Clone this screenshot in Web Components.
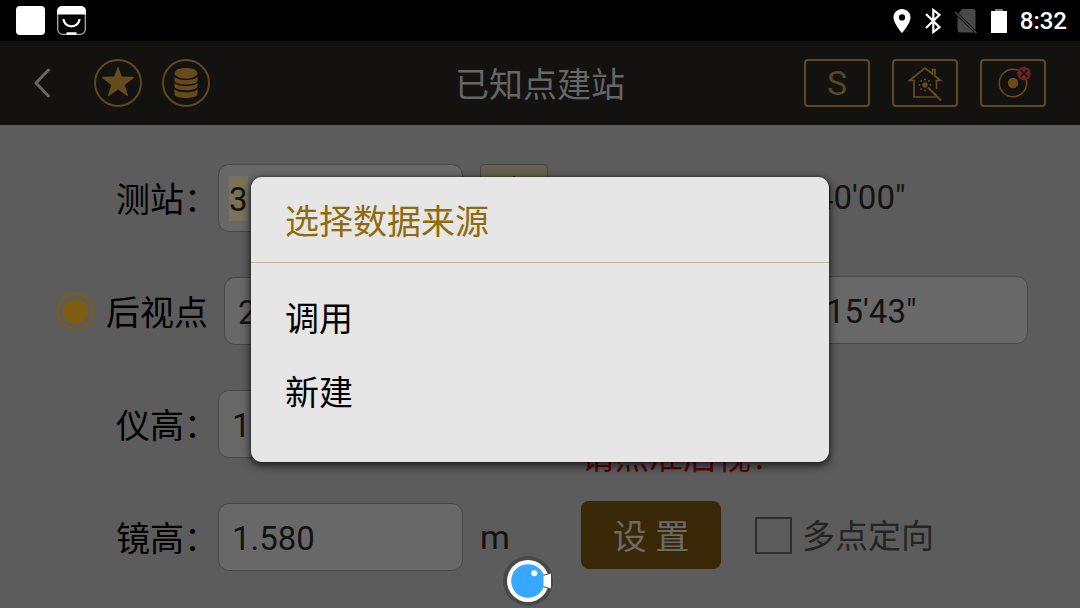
<!DOCTYPE html>
<html lang="zh-CN">
<head>
<meta charset="utf-8">
<meta name="viewport" content="width=device-width, initial-scale=1">
<title>已知点建站</title>
<style>
  body {
    margin: 0;
    background: #5c5c5c;
    color: #000;
    font: 34px/48px Roboto, "Noto Sans CJK SC", sans-serif;
  }
</style>
</head>
<body>
<station-app></station-app>

<script>
const define = (name, html, setup) => {
  const template = document.createElement('template');
  template.innerHTML = html;
  customElements.define(name, class extends HTMLElement {
    connectedCallback() {
      if (this.shadowRoot) return;
      const root = this.attachShadow({ mode: 'open' });
      root.append(template.content.cloneNode(true));
      if (setup) setup(root, this);
    }
  });
};

/* Android status bar */
define('status-bar', `
  <style>
    :host { display: flex; align-items: center; justify-content: space-between; box-sizing: border-box;
      height: 41px; padding: 0 13px 0 16px; background: #000; color: #fff; }
    div { display: flex; align-items: center; }
    .left { gap: 12px; }
    svg { display: block; flex: none; }
    time { font-size: 24px; line-height: 28px; font-weight: 500; margin-left: 6px; }
  </style>
  <div class="left">
    <svg width="29" height="29"><rect width="29" height="29" rx="4" fill="#fff"/></svg>
    <svg width="29" height="29" viewBox="0 0 29 29"><rect x=".7" y=".7" width="27.6" height="27.6" rx="5" fill="none" stroke="#aaa" stroke-width="1.3"/><path d="M0 8.500V5a5 5 0 0 1 5-5h19a5 5 0 0 1 5 5v3.500z" fill="#fff"/><path d="M6.500 13c0 4 3.400 7.300 8 7.300s8-3.300 8-7.300" fill="none" stroke="#fff" stroke-width="2.200"/><path d="M9.500 27.500h10" stroke="#fff" stroke-width="2.500"/></svg>
  </div>
  <div>
    <svg width="32" height="32" viewBox="0 0 32 32"><path d="M16 4c-4.700 0-8.500 3.700-8.500 8.400C7.500 18.500 16 28 16 28s8.500-9.500 8.500-15.600C24.500 7.700 20.700 4 16 4zm0 11.500a3.100 3.100 0 1 1 0-6.200 3.100 3.100 0 0 1 0 6.200z" fill="#fff"/></svg>
    <svg width="30" height="32" viewBox="0 0 30 32"><path d="M8 9l13.500 13.200L15.300 27V5l6.200 4.800L8 23" fill="none" stroke="#fff" stroke-width="2.200"/></svg>
    <svg width="38" height="32" viewBox="2 0 38 32"><path d="M16 4h11.500a2 2 0 0 1 2 2v19L12.500 8.500zM11.500 11.500l16.500 16H14a3 3 0 0 1-2.500-3z" fill="#484848"/><path d="M9 7l21.500 21" stroke="#484848" stroke-width="1.600"/></svg>
    <svg width="28" height="32" viewBox="0 0 28 32"><path d="M5 6h16v22H5z" fill="#fff"/><path d="M9 4h8v2H9z" fill="#777"/></svg>
    <time>8:32</time>
  </div>`);

/* Toolbar button: round by default, framed box with the "boxed" attribute */
define('tool-button', `
  <style>
    :host { display: block; flex: none; }
    button { display: grid; place-items: center; box-sizing: border-box; width: 48px; height: 48px; padding: 0;
      border: 2px solid #5f481c; border-radius: 50%; background: none; color: #574626; font: inherit; line-height: 44px; }
    :host([boxed]) button { width: 66px; border-radius: 4px; }
    :host([plain]) button { width: 24px; border: 0; }
  </style>
  <button type="button"><slot></slot></button>`,
  (root, host) => root.querySelector('button').setAttribute('aria-label', host.getAttribute('label')));

define('app-header', `
  <style>
    :host { display: grid; grid-template-columns: 1fr auto 1fr; align-items: center; box-sizing: border-box;
      height: 84px; padding: 0 34px 0 30px; background: #141210; color: #666; }
    nav { display: flex; align-items: center; gap: 20px; }
    nav.start tool-button:first-child { margin-right: 20px; }
    nav.end { justify-content: flex-end; gap: 22px; }
    h1 { margin: 0; padding: 4px 0 0 4px; font: inherit; font-weight: 400; }
    svg { display: block; }
  </style>
  <nav class="start">
    <tool-button plain label="返回"><svg width="24" height="32" viewBox="0 0 24 32"><path d="M18.500 3L6 16l12.500 13" fill="none" stroke="#666" stroke-width="3" stroke-linecap="round" stroke-linejoin="round"/></svg></tool-button>
    <tool-button label="收藏"><svg width="34" height="34" viewBox="0 0 34 34"><path d="M17 0l3.900 10.500 11.100.2a.8.800 0 0 1 .5 1.500l-8.800 6.800 3.300 10.300c.3.900-.4 1.200-1 .8L17 23.600l-9 6.500c-.6.400-1.300.1-1-.8L10.300 19 1.500 12.200a.8.800 0 0 1 .5-1.500l11.100-.2z" fill="#664b1c"/></svg></tool-button>
    <tool-button label="数据"><svg width="24" height="32" viewBox="0 0 24 32"><g fill="#664b1c"><ellipse cx="12" cy="6.200" rx="11.500" ry="5.500"/><path d="M.5 9.500c2 4.700 21 4.700 23 0v4.200c-1 5-22 5-23 0z"/><path d="M.5 15.600c2 4.700 21 4.700 23 0v4c-1 5-22 5-23 0z"/><path d="M.5 21.500c2 4.700 21 4.700 23 0v5.700c-1 5-22 5-23 0z"/></g><path d="M.5 21.300c2 4.700 21 4.700 23 0" fill="none" stroke="#141210"/></svg></tool-button>
  </nav>
  <h1>已知点建站</h1>
  <nav class="end">
    <tool-button boxed label="S">S</tool-button>
    <tool-button boxed label="环境"><svg width="36" height="36" viewBox="0 0 36 36"><g fill="none" stroke="#6b4b1c" stroke-width="1.700"><path d="M29.500 24V15.500h4L28 11V4.500h-2.500V9L18 3 2.500 15.500H7V32h22"/><path d="M21 22.500l13 13" stroke-width="2"/></g><circle cx="18" cy="20" r="2.700" fill="#6b4b1c"/><g fill="#6b4b1c"><circle cx="18" cy="14.500" r="1"/><circle cx="18" cy="25.500" r="1"/><circle cx="12.500" cy="20" r="1"/><circle cx="23.500" cy="20" r="1"/><circle cx="14.100" cy="16.100" r="1"/><circle cx="21.900" cy="16.100" r="1"/><circle cx="14.100" cy="23.900" r="1"/></g></svg></tool-button>
    <tool-button boxed label="对中"><svg width="36" height="36" viewBox="0 0 36 36"><circle cx="18" cy="18" r="13.700" fill="none" stroke="#6b4b1c" stroke-width="1.500"/><circle cx="18" cy="18" r="5.200" fill="#6b4b1c"/><circle cx="29" cy="8.500" r="6.800" fill="#682424"/><path d="M25.500 5l7 7m0-7l-7 7" stroke="#241010" stroke-width="1.700"/></svg></tool-button>
  </nav>`);

/* Labelled text box; the "lead" slot holds a control before the label, the "tail" slot a unit or button */
define('text-field', `
  <style>
    :host { display: flex; align-items: center; min-width: 0; height: 68px; }
    .head { display: flex; flex: none; align-items: center; justify-content: flex-end; width: 218px; gap: 12px; }
    :host([wide]) .head { width: 208px; margin-right: 16px; }
    :host([bare]) .head { width: 231px; }
    label { padding-top: 4px; }
    input { flex: 1; min-width: 0; box-sizing: border-box; height: 68px; padding: 2px 13px 0; border: 1px solid #484848;
      border-radius: 11px; background: #686868; color: #131313; font: inherit; font-size: 33px; outline: 0; }
    :host([marked]) input { background: linear-gradient(#7b7158, #7b7158) 10px center / 19px 45px no-repeat #686868; padding-left: 10px; }
    .tail { flex: none; width: 85px; box-sizing: border-box; padding-left: 17px; color: #131313; }
    :host([bare]) .tail { display: none; }
  </style>
  <div class="head"><slot name="lead"></slot><label for="box"></label></div>
  <input id="box" type="text">
  <div class="tail"><slot name="tail"></slot></div>`,
  (root, host) => {
    const box = root.querySelector('input');
    root.querySelector('label').textContent = host.getAttribute('label') || '';
    box.value = host.getAttribute('value');
    if (host.hasAttribute('bare')) box.setAttribute('aria-label', '角度');
  });

define('station-form', `
  <style>
    :host { display: grid; grid-template-columns: minmax(0, 548fr) minmax(0, 447fr); column-gap: 33px;
      padding: 39px 52px 37px 0; }
    .column { display: flex; flex-direction: column; gap: 45px; }
    .right { gap: 0; }
    input { appearance: none; box-sizing: border-box; width: 37px; height: 37px; margin: 0; flex: none; }
    input[type=radio] { border: 2px solid #7d5e10; border-radius: 50%;
      background: radial-gradient(circle, #7d5e10 12px, transparent 13px); }
    input[type=checkbox] { border: 2px solid #2e2e2e; }
    .add { display: block; box-sizing: border-box; width: 68px; height: 68px; padding: 0; border: 1px solid #48453a;
      border-radius: 4px; background: #646150; }
    .add svg { display: block; margin: auto; }
    output { margin-bottom: 44px; padding-left: 234px; color: #131313; font-size: 33px; line-height: 68px; }
    .hint { margin: 89px 0 20px; color: #610303; }
    .actions { display: flex; align-items: center; gap: 34px; }
    .set { width: 140px; height: 68px; padding: 4px 0 0; border: 0; border-radius: 8px; background: #382808; color: #6c6a65; font: inherit; }
    .actions label { display: flex; align-items: center; gap: 10px; color: #252525; font-size: 33px; }
    .actions span { padding-top: 4px; }
  </style>
  <div class="column">
    <text-field marked label="测站：" value="3"><button class="add" slot="tail" type="button" aria-label="添加"><svg width="40" height="48" viewBox="0 0 40 48"><path d="M20 4v40M2 24h36" stroke="#382808" stroke-width="4" stroke-linecap="round"/></svg></button></text-field>
    <text-field wide label="后视点" value="2"><input slot="lead" type="radio" checked aria-label="后视点"></text-field>
    <text-field label="仪高：" value="1"></text-field>
    <text-field label="镜高：" value="1.580"><span slot="tail">m</span></text-field>
  </div>
  <div class="column right">
    <output>40'00"</output>
    <text-field bare value="15'43&quot;"></text-field>
    <p class="hint">请照准后视！</p>
    <div class="actions">
      <button class="set" type="button">设 置</button>
      <label><input type="checkbox"><span>多点定向</span></label>
    </div>
  </div>`);

/* Modal list of choices; the title and the options are slotted */
define('choice-dialog', `
  <style>
    :host { display: block; position: absolute; inset: 177px 0 auto; pointer-events: none; }
    section { box-sizing: border-box; width: 578px; max-width: 90%; margin: 0 auto; border-radius: 11px; overflow: hidden;
      background: #e6e6e6; box-shadow: 0 3px 8px 1px #000a, 0 0 2px #0008; pointer-events: auto; }
    header { padding: 21px 34px 16px; border-bottom: 1px solid #c6b9a4; color: #8f6b0d; }
    .list { display: flex; flex-direction: column; padding: 19px 0 32px; }
    ::slotted(h2) { margin: 0; font: inherit; }
    ::slotted(button) { height: 74px; padding: 0 34px; border: 0; background: none; color: #000; font: inherit; text-align: left; }
  </style>
  <section role="dialog" aria-modal="true">
    <header><slot name="title"></slot></header>
    <div class="list"><slot></slot></div>
  </section>`);

/* Floating screen recorder bubble */
define('record-bubble', `
  <style>
    :host { display: block; position: absolute; left: calc(50% - 38px); bottom: 1px; }
    button { display: block; padding: 0; border: 0; background: none; }
    svg { display: block; }
  </style>
  <button type="button" aria-label="录屏"><svg width="52" height="52" viewBox="0 0 52 52"><circle cx="26" cy="26" r="25" fill="#484848"/><circle cx="26" cy="26" r="21" fill="#fff"/><circle cx="26" cy="26" r="16.800" fill="#37a7ff"/><path d="M41.500 20.300l7.500-2.200v15.800l-7.500-2.200z" fill="#fff"/><path d="M41.500 20.300l7.500-2.200M41.500 31.700l7.500 2.200" stroke="#484848" stroke-width="1"/><circle cx="32.300" cy="18.200" r="3" fill="#fff"/></svg></button>`);

define('station-app', `
  <style>
    :host { display: block; position: relative; min-height: 100vh; overflow: hidden; }
  </style>
  <status-bar></status-bar>
  <app-header></app-header>
  <station-form></station-form>
  <choice-dialog>
    <h2 slot="title">选择数据来源</h2>
    <button type="button">调用</button>
    <button type="button">新建</button>
  </choice-dialog>
  <record-bubble></record-bubble>`);
</script>
</body>
</html>
